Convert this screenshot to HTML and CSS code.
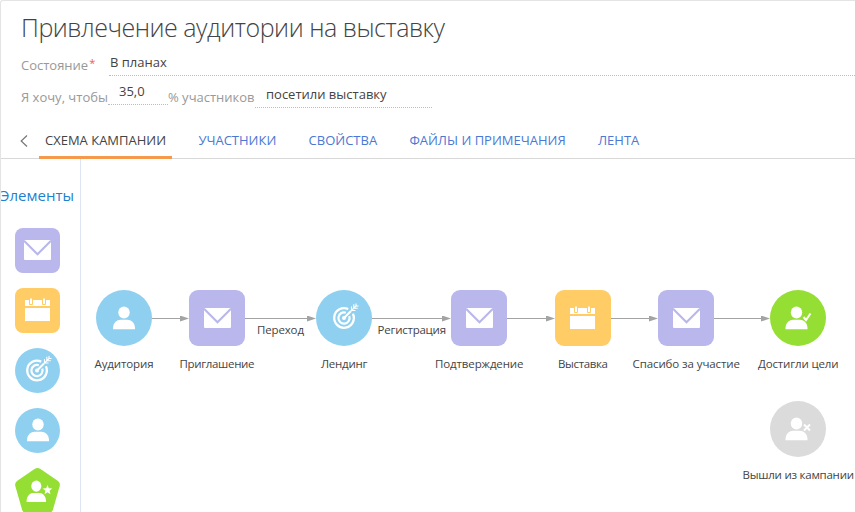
FILE: index.html
```html
<!DOCTYPE html>
<html lang="ru">
<head>
<meta charset="utf-8">
<title>Привлечение аудитории на выставку</title>
<link rel="stylesheet" href="styles.css">
</head>
<body>
<svg class="defs" aria-hidden="true">
  <defs>
    <g id="mail">
      <rect x="-13.5" y="-10" width="27" height="20" rx="1" fill="#fff"/>
      <path d="M-13.5-9.3L0 4.200 13.500-9.300" fill="none" stroke="#b9b7eb" stroke-width="2.100"/>
    </g>
    <g id="calendar" fill="#fff">
      <path d="M-12.500-10h25v6h-25zM-12.500-2h25v13h-25z"/>
      <path d="M-8-12h3v6.500h-3zM5-12h3v6.500h-3z" stroke="#ffcc66" stroke-width="1"/>
    </g>
    <g id="person" fill="#fff">
      <ellipse cx="0" cy="-5.500" rx="5.700" ry="5.900"/>
      <path d="M-11 11.300V9.800C-10.600 4.500-7 1.800-3.500 1.800H3.500C7 1.800 10.600 4.500 11 9.800V11.300z"/>
    </g>
    <g id="target" fill="none" stroke="#fff">
      <path d="M4.200-8.900A9.800 9.800 0 1 0 8.900-4.200" stroke-width="2.300"/>
      <path d="M1.800-5.300A5.600 5.600 0 1 0 5.300-1.800" stroke-width="2.200"/>
      <circle cx="0" cy="0" r="2" fill="#fff" stroke="none"/>
      <path d="M0 0L7-7" stroke-width="2"/>
      <path d="M7-7l5-5M7.500-7.500v-4M7.500-7.500h4M9.800-9.800v-4M9.800-9.800h4M12-12v-2.500M12-12h2.500" stroke-width="1.100"/>
    </g>
    <marker id="arrow" viewBox="0 0 9 6" markerWidth="9" markerHeight="6" refX="0" refY="3" markerUnits="userSpaceOnUse">
      <path d="M0 0L9 3 0 6z" fill="#a3a3a3"/>
    </marker>
  </defs>
</svg>
<div class="page">
  <header class="header">
    <h1 class="title"><span class="title-text">Привлечение аудитории на выставку</span></h1>
    <div class="row state">
      <span class="label">Состояние<sup class="required">*</sup></span>
      <span class="field">В планах</span>
    </div>
    <div class="row goal">
      <span class="label want">Я хочу, чтобы</span>
      <span class="field percent">35,0</span>
      <span class="label people">% участников</span>
      <span class="field action">посетили выставку</span>
    </div>
  </header>
  <nav class="tabs">
    <svg class="back" width="8" height="12" viewBox="0 0 8 12"><path d="M7 .5L1.200 6 7 11.500" fill="none" stroke="#777" stroke-width="1.200"/></svg>
    <a class="tab active">СХЕМА КАМПАНИИ</a>
    <a class="tab">УЧАСТНИКИ</a>
    <a class="tab">СВОЙСТВА</a>
    <a class="tab">ФАЙЛЫ И ПРИМЕЧАНИЯ</a>
    <a class="tab">ЛЕНТА</a>
  </nav>
  <main class="body">
    <aside class="palette">
      <h2 class="palette-title">Элементы</h2>
      <svg class="item" viewBox="-22.5 -22.500 45 45"><rect x="-22.5" y="-22.5" width="45" height="45" rx="8" fill="#b9b7eb"/><use href="#mail" y="-.5"/></svg>
      <svg class="item" viewBox="-22.5 -22.500 45 45"><rect x="-22.5" y="-22.5" width="45" height="45" rx="8" fill="#ffcc66"/><use href="#calendar" y="-.5"/></svg>
      <svg class="item" viewBox="-22.5 -22.500 45 45"><circle r="22.5" fill="#8fd0f0"/><use href="#target" x="-.5"/></svg>
      <svg class="item" viewBox="-22.5 -22.500 45 45"><circle r="22.5" fill="#8fd0f0"/><use href="#person" x=".5" y="-.5"/></svg>
      <svg class="item" viewBox="-22.5 -22.500 45 45">
        <path d="M-3-21.500Q0-23.500 3-21.500L20.500-9.500Q23-7.500 22.200-4.500L15.500 19Q14.500 22.500 11 22.500H-11Q-14.500 22.500-15.500 19L-22.200-4.500Q-23-7.500-20.500-9.500z" fill="#95df34"/>
        <g transform="translate(-1.200 .8) scale(.88 .94)"><use href="#person"/></g>
        <path d="M10-5.500l1.300 3.300 3.500.2-2.700 2.200.9 3.500-3-2-3 2 .9-3.500L5.200-2l3.500-.2z" fill="#fff"/>
      </svg>
    </aside>
    <svg class="canvas" viewBox="81 159 774 353">
      <g class="flows">
        <path d="M152 318.500H180"/><path d="M245 318.500H307"/><path d="M372 318.500H442"/>
        <path d="M507 318.500H546"/><path d="M611 318.500H649"/><path d="M714 318.500H761"/>
      </g>
      <circle cx="124" cy="318" r="28" fill="#8fd0f0"/><use href="#person" x="124" y="318"/>
      <rect x="189" y="290" width="56" height="56" rx="9" fill="#b9b7eb"/><use href="#mail" x="217.500" y="318"/>
      <circle cx="344" cy="318" r="28" fill="#8fd0f0"/><use href="#target" x="344" y="318"/>
      <rect x="451" y="290" width="56" height="56" rx="9" fill="#b9b7eb"/><use href="#mail" x="479.500" y="318"/>
      <rect x="555" y="290" width="56" height="56" rx="9" fill="#ffcc66"/><use href="#calendar" x="582.500" y="318"/>
      <rect x="658" y="290" width="56" height="56" rx="9" fill="#b9b7eb"/><use href="#mail" x="686.500" y="318"/>
      <circle cx="798" cy="318" r="28" fill="#95df34"/><use href="#person" x="796.500" y="318"/>
      <path d="M803.500 317l2.500 3 4.500-6.500" fill="none" stroke="#fff" stroke-width="2"/>
      <circle cx="798" cy="429" r="28" fill="#dbdbdb"/><use href="#person" x="796.500" y="429"/>
      <path d="M804 424.500l6 6m0-6l-6 6" stroke="#fff" stroke-width="2"/>
      <g class="names">
        <text x="94.500" y="368" textLength="59">Аудитория</text>
        <text x="179.500" y="368" textLength="75">Приглашение</text>
        <text x="257" y="334" textLength="47">Переход</text>
        <text x="321" y="368" textLength="46.500">Лендинг</text>
        <text x="377.500" y="334" textLength="68.500">Регистрация</text>
        <text x="435" y="368" textLength="88.500">Подтверждение</text>
        <text x="558" y="368" textLength="50">Выставка</text>
        <text x="632.500" y="368" textLength="107.500">Спасибо за участие</text>
        <text x="758" y="368" textLength="80.500">Достигли цели</text>
        <text x="742.500" y="479" textLength="111.500">Вышли из кампании</text>
      </g>
    </svg>
  </main>
</div>
</body>
</html>
```
FILE: styles.css
```css
* { box-sizing: border-box; }
body { margin: 0; background: #fff; font-family: "Open Sans", sans-serif; font-size: 13px; color: #444; }
.defs { display: block; width: 0; height: 0; }
.page { height: 512px; overflow: hidden; display: flex; flex-direction: column; border-top: 1px solid #e4e4e4; border-left: 1px solid #e4e4e4; border-top-left-radius: 3px; }
.header { height: 121px; padding: 8px 0 0 20px; }
.title { margin: 0; height: 37px; line-height: 36px; font-size: 25px; letter-spacing: -.47px; font-weight: 300; color: #444; white-space: nowrap; }
.row { display: flex; align-items: flex-start; white-space: nowrap; line-height: 18px; }
.label { color: #999; }
.field { border-bottom: 1px dotted #bbb; height: 22px; }
.state { margin-top: 7px; height: 30px; }
.state .label { width: 88px; padding-top: 3px; }
.state .field { flex: 1; height: 23px; padding-left: 1px; }
.required { color: #ef5b50; font-size: 11px; line-height: 0; vertical-align: 3px; margin-left: 1px; }
.goal .label { padding-top: 5px; }
.goal .want { width: 87px; }
.goal .percent { width: 60px; padding-left: 11px; line-height: 16px; }
.goal .people { width: 87px; }
.goal .action { width: 177px; height: 25px; padding: 2px 0 0 11px; }
.tabs { display: flex; flex: none; height: 37px; border-bottom: 1px solid #d8d8d8; padding-left: 19px; white-space: nowrap; }
.back { margin: 13px 11px 0 0; flex: none; }
.tab { height: 37px; padding: 0 6px; margin-right: 20.3px; line-height: 37px; color: #4a78d4; }
.active { color: #444; border-bottom: 3px solid #f59a4c; }
.body { display: flex; flex: 1; min-height: 0; }
.palette { width: 80px; flex: none; border-right: 1px solid #dde4f2; padding-top: 26px; display: flex; flex-direction: column; align-items: flex-start; }
.palette-title { margin: 0 0 22px -1px; font-size: 15px; font-weight: 400; line-height: 21px; color: #1e81cf; }
.item { width: 45px; height: 45px; flex: none; margin: 0 0 15px 14px; }
.canvas { width: 774px; height: 353px; flex: none; }
.flows path { stroke: #a3a3a3; stroke-width: 1; marker-end: url(#arrow); }
.names { font-family: "Open Sans", sans-serif; font-size: 11.5px; fill: #444; }
```
